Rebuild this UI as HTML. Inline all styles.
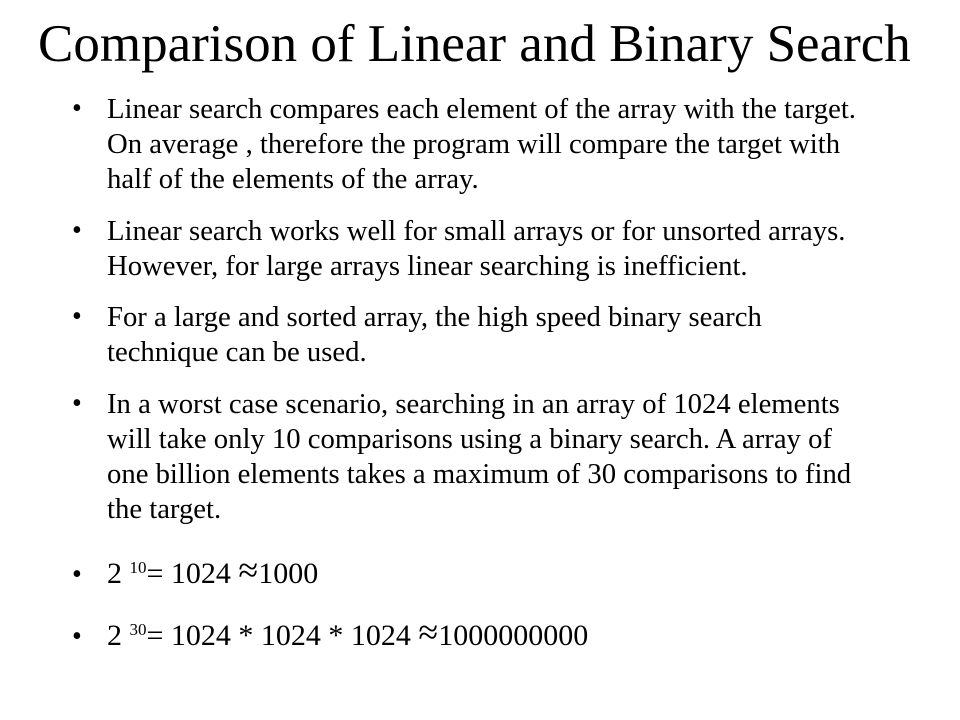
<!DOCTYPE html>
<html><head><meta charset="utf-8"><style>
body{margin:0;background:#fff;}
#p{position:relative;width:960px;height:720px;overflow:hidden;font-family:"Liberation Serif",serif;color:#000;}
.t{position:absolute;left:38px;top:12px;font-size:53px;white-space:nowrap;line-height:64px;}
.l{position:absolute;left:107px;font-size:28.7px;white-space:nowrap;line-height:30px;}
.f{font-size:30px;}
.b{position:absolute;left:72px;font-size:28px;line-height:30px;}
sup{font-size:17px;vertical-align:10px;line-height:0;}
.ap{font-size:36px;line-height:0;position:relative;top:-1px;}
</style></head><body><div id="p">
<div class="t">Comparison of Linear and Binary Search</div>
<div class="b" style="top:94px">•</div>
<div class="l" style="top:94px">Linear search compares each element of the array with the target.</div>
<div class="l" style="top:129px">On average , therefore the program will compare the target with</div>
<div class="l" style="top:164px">half of the elements of the array.</div>
<div class="b" style="top:216px">•</div>
<div class="l" style="top:216px">Linear search works well for small arrays or for unsorted arrays.</div>
<div class="l" style="top:251px">However, for large arrays linear searching is inefficient.</div>
<div class="b" style="top:302px">•</div>
<div class="l" style="top:302px">For a large and sorted array, the high speed binary search</div>
<div class="l" style="top:337px">technique can be used.</div>
<div class="b" style="top:389px">•</div>
<div class="l" style="top:389px">In a worst case scenario, searching in an array of 1024 elements</div>
<div class="l" style="top:424px">will take only 10 comparisons using a binary search. A array of</div>
<div class="l" style="top:459px">one billion elements takes a maximum of 30 comparisons to find</div>
<div class="l" style="top:494px">the target.</div>
<div class="b" style="top:560px">•</div>
<div class="l f" style="top:559px">2 <sup>10</sup>= 1024 <span class="ap">≈</span>1000</div>
<div class="b" style="top:622px">•</div>
<div class="l f" style="top:621px">2 <sup>30</sup>= 1024 * 1024 * 1024 <span class="ap">≈</span>1000000000</div>
</div></body></html>
